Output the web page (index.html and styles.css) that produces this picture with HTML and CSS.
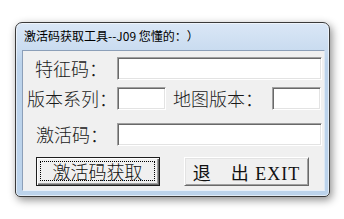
FILE: index.html
```html
<!DOCTYPE html>
<html lang="zh-CN">
<head>
<meta charset="utf-8">
<title>激活码获取工具</title>
<link rel="stylesheet" href="styles.css">
</head>
<body>
<div class="window">
  <div class="titlebar">激活码获取工具--J09 您懂的：）</div>
  <div class="client">
    <div class="row row1">
      <span class="lbl lbl1">特征码：</span>
      <span class="field field-wide"></span>
    </div>
    <div class="row row2">
      <span class="lbl lbl2">版本系列：</span>
      <span class="field field-short"></span>
      <span class="lbl lbl-map">地图版本：</span>
      <span class="field field-short"></span>
    </div>
    <div class="row row3">
      <span class="lbl lbl3">激活码：</span>
      <span class="field field-wide"></span>
    </div>
    <div class="row buttons">
      <button class="btn btn-default"><span class="focus">激活码获取</span></button>
      <button class="btn btn-exit">退　出 EXIT</button>
    </div>
  </div>
</div>
</body>
</html>
```
FILE: styles.css
```css
html, body {
  margin: 0;
  padding: 0;
  background: #ffffff;
}
body {
  width: 344px;
  height: 219px;
  overflow: hidden;
  font-family: "Noto Sans CJK SC", "Noto Sans", sans-serif;
  text-spacing-trim: space-all;
}
.window {
  margin: 22px 0 0 15px;
  width: 315px;
  height: 175px;
  box-sizing: border-box;
  border: 1px solid #3a3a3a;
  border-radius: 7px 7px 5px 5px;
  background: linear-gradient(#dae7f6 0px, #cadcf0 26px, #bcd3eb 40px, #bcd3eb 100%);
  box-shadow: 2px 3px 8px rgba(0, 0, 0, 0.45), inset 0 0 0 1px rgba(255, 255, 255, 0.55);
  padding: 0 4px 5px 6px;
  display: flex;
  flex-direction: column;
}
.titlebar {
  height: 27px;
  line-height: 25px;
  padding-left: 2px;
  font-size: 12px;
  color: #000;
  white-space: nowrap;
}
.client {
  flex: 1;
  background: #f0f0f0;
  border: 1px solid;
  border-color: #8c9fb8 #dde8f4 #e8f0f9 #8c9fb8;
  padding-top: 6px;
  display: flex;
  flex-direction: column;
}
.row {
  display: flex;
  align-items: center;
  height: 23px;
}
.row2 { margin-top: 7px; }
.row3 { margin-top: 13px; }
.buttons {
  margin-top: 11px;
  height: 29px;
}
.lbl {
  font-size: 18px;
  font-weight: 300;
  line-height: 23px;
  color: #1a1a1a;
  white-space: nowrap;
  box-sizing: border-box;
}
.lbl1, .lbl2, .lbl3 { width: 94px; }
.lbl1 { padding-left: 12px; }
.lbl2 { padding-left: 4px; }
.lbl3 { padding-left: 13px; }
.lbl-map {
  margin-left: 7px;
  width: 99px;
}
.field {
  height: 23px;
  box-sizing: border-box;
  background: #ffffff;
  border: 1px solid;
  border-color: #a0a0a0 #ffffff #ffffff #a0a0a0;
  box-shadow: inset 1px 1px 0 #696969, inset -1px -1px 0 #e3e3e3;
}
.field-wide { width: 205px; }
.field-short { width: 49px; }
.btn {
  height: 29px;
  box-sizing: border-box;
  padding: 0;
  background: #f0f0f0;
  font-family: "Noto Sans CJK SC", sans-serif;
  font-size: 18px;
  font-weight: 300;
  color: #111;
  display: flex;
  align-items: stretch;
  justify-content: center;
  text-spacing-trim: space-all;
}
.btn-default {
  margin-left: 13px;
  width: 124px;
  border: 1px solid #1e1e1e;
  box-shadow: inset 1px 1px 0 #ffffff, inset -1px -1px 0 #696969, inset -2px -2px 0 #a0a0a0;
}
.focus {
  flex: 1;
  margin: 3px 4px 4px 3px;
  border: 1px dotted #000;
  display: flex;
  align-items: center;
  justify-content: center;
  line-height: 1;
}
.btn-exit {
  margin-left: 24px;
  width: 125px;
  border: 1px solid;
  border-color: #ffffff #696969 #696969 #ffffff;
  box-shadow: inset 1px 1px 0 #e3e3e3, inset -1px -1px 0 #a0a0a0;
  align-items: center;
  font-family: "Liberation Serif", "Noto Sans CJK SC", serif;
  font-weight: 400;
  letter-spacing: 1px;
  white-space: pre;
}
```
